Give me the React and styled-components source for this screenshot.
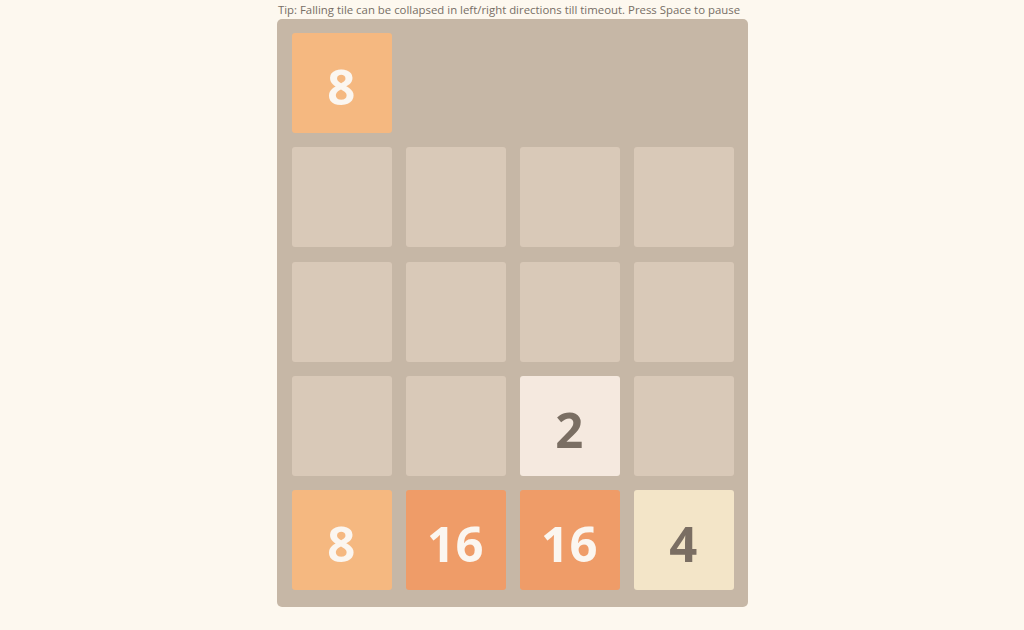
import styled, { createGlobalStyle } from "styled-components";

const GlobalStyle = createGlobalStyle`
  html, body {
    margin: 0;
    padding: 0;
    background: #fdf8ef;
    font-family: "Open Sans", "Noto Sans", sans-serif;
  }
`;

const Page = styled.div`
  display: flex;
  flex-direction: column;
  align-items: center;
  width: 1024px;
  height: 630px;
  padding-top: 2px;
  box-sizing: border-box;
`;

const Tip = styled.div`
  font-size: 11.4px;
  line-height: 15px;
  color: #776e65;
  margin-left: -6px;
  height: 17px;
  white-space: nowrap;
`;

const Board = styled.div`
  display: grid;
  grid-template-columns: repeat(4, 100px);
  grid-template-rows: repeat(5, 100px);
  column-gap: 14px;
  row-gap: 14.25px;
  padding: 14px 14px 17px 15px;
  background: #c6b7a6;
  border-radius: 5px;
`;

const colors = {
  0: { bg: "#d9c9b8", fg: "transparent" },
  2: { bg: "#f5e9df", fg: "#7a6e63" },
  4: { bg: "#f3e5c8", fg: "#7a6e63" },
  8: { bg: "#f5b880", fg: "#fbf6f0" },
  16: { bg: "#ef9c68", fg: "#fbf6f0" },
};

const Cell = styled.div`
  width: 100px;
  height: 100px;
  box-sizing: border-box;
  padding-top: 6px;
  border-radius: 3px;
  background: ${(p) => colors[p.value].bg};
  color: ${(p) => colors[p.value].fg};
  display: flex;
  align-items: center;
  justify-content: center;
  font-size: 49px;
  font-weight: 700;
  letter-spacing: 0.5px;
`;

const Blank = styled.div``;

const rows = [
  [8, null, null, null],
  [0, 0, 0, 0],
  [0, 0, 0, 0],
  [0, 0, 2, 0],
  [8, 16, 16, 4],
];

export default function App() {
  return (
    <>
      <GlobalStyle />
      <Page>
        <Tip>
          Tip: Falling tile can be collapsed in left/right directions till
          timeout. Press Space to pause
        </Tip>
        <Board>
          {rows.flat().map((v, i) =>
            v === null ? (
              <Blank key={i} />
            ) : (
              <Cell key={i} value={v}>
                {v > 0 ? v : ""}
              </Cell>
            )
          )}
        </Board>
      </Page>
    </>
  );
}
